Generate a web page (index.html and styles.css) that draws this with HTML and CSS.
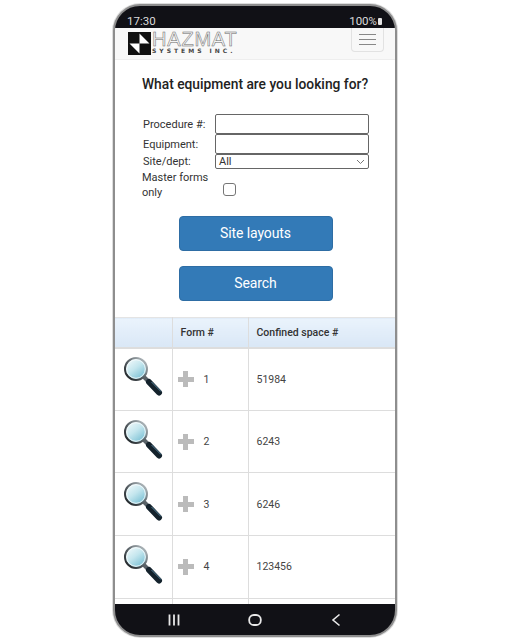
FILE: index.html
```html
<!DOCTYPE html>
<html lang="en">
<head>
  <meta charset="UTF-8">
  <meta name="viewport" content="width=device-width, initial-scale=1">
  <title>Hazmat Systems</title>
  <link rel="stylesheet" href="styles.css">
</head>
<body>
  <svg class="defs" width="0" height="0">
    <defs>
      <linearGradient id="glass" x1="0.15" y1="0.1" x2="0.8" y2="0.95">
        <stop offset="0" stop-color="#eef8fa"/>
        <stop offset="0.45" stop-color="#c4e6ee"/>
        <stop offset="1" stop-color="#74bdd2"/>
      </linearGradient>
      <linearGradient id="rim" x1="1" y1="0" x2="0" y2="1">
        <stop offset="0" stop-color="#c6ced2"/>
        <stop offset="0.5" stop-color="#5a6267"/>
        <stop offset="1" stop-color="#15191c"/>
      </linearGradient>
      <symbol id="lens" viewBox="0 0 40 42">
        <path d="M20 20 L25 25" stroke="#596268" stroke-width="4"/>
        <path d="M25 25 L35 35.5" stroke="#14222c" stroke-width="6" stroke-linecap="round"/>
        <path d="M27.5 25 L37 34.5" stroke="#55829b" stroke-width="1"/>
        <circle cx="12" cy="12" r="11" fill="url(#glass)" stroke="url(#rim)" stroke-width="2"/>
        <circle cx="12" cy="12" r="9.3" fill="none" stroke="#f6fbfc" stroke-width="0.9"/>
      </symbol>
    </defs>
  </svg>

  <div class="phone">
    <div class="status-bar">
      <span>17:30</span>
      <span class="battery-wrap">100%<span class="battery"></span></span>
    </div>

    <div class="screen">
      <div class="navbar">
        <div class="logo">
          <svg class="logo-mark" width="23" height="23" viewBox="0 0 23 23">
            <rect width="23" height="23" fill="#111"/>
            <path d="M11.5 1.5 L21.5 11.5 H11.5 Z M11.5 11.5 V21.5 L1.5 11.5 Z" fill="#fff"/>
          </svg>
          <div class="logo-text">
            <div class="logo-name">HAZMAT</div>
            <div class="logo-sub">SYSTEMS INC.</div>
          </div>
        </div>
        <div class="toggler">
          <span></span><span></span><span></span>
        </div>
      </div>

      <h1>What equipment are you looking for?</h1>

      <div class="form">
        <div class="row row-input">
          <label>Procedure #:</label>
          <div class="fake-input"></div>
        </div>
        <div class="row row-input">
          <label>Equipment:</label>
          <div class="fake-input"></div>
        </div>
        <div class="row row-select">
          <label>Site/dept:</label>
          <div class="fake-select">
            <span>All</span>
            <svg width="9" height="6" viewBox="0 0 9 6"><path d="M1 1 L4.5 4.5 L8 1" fill="none" stroke="#777" stroke-width="1"/></svg>
          </div>
        </div>
        <div class="row-master">
          <label>Master forms only</label>
          <div class="check"></div>
        </div>
      </div>

      <div class="buttons">
        <button>Site layouts</button>
        <button>Search</button>
      </div>

      <table>
        <thead>
          <tr>
            <th class="col-icon"></th>
            <th class="col-form">Form #</th>
            <th>Confined space #</th>
          </tr>
        </thead>
        <tbody>
          <tr>
            <td><svg class="lens" width="40" height="42"><use href="#lens"/></svg></td>
            <td><div class="form-no"><span class="plus"></span>1</div></td>
            <td>51984</td>
          </tr>
          <tr>
            <td><svg class="lens" width="40" height="42"><use href="#lens"/></svg></td>
            <td><div class="form-no"><span class="plus"></span>2</div></td>
            <td>6243</td>
          </tr>
          <tr>
            <td><svg class="lens" width="40" height="42"><use href="#lens"/></svg></td>
            <td><div class="form-no"><span class="plus"></span>3</div></td>
            <td>6246</td>
          </tr>
          <tr>
            <td><svg class="lens" width="40" height="42"><use href="#lens"/></svg></td>
            <td><div class="form-no"><span class="plus"></span>4</div></td>
            <td>123456</td>
          </tr>
          <tr><td></td><td></td><td></td></tr>
        </tbody>
      </table>
    </div>

    <div class="nav-bar">
      <svg width="12" height="12" viewBox="0 0 12 12"><path d="M1.5 0.5 V11.5 M6 0.5 V11.5 M10.5 0.5 V11.5" stroke="#e8e8e8" stroke-width="1.8"/></svg>
      <svg width="14" height="12" viewBox="0 0 14 12"><rect x="1.2" y="1" width="11.6" height="10" rx="4.6" fill="none" stroke="#e8e8e8" stroke-width="1.8"/></svg>
      <svg width="10" height="14" viewBox="0 0 10 14"><path d="M8.5 1.5 L2 7 L8.5 12.5" fill="none" stroke="#e8e8e8" stroke-width="1.6"/></svg>
    </div>
  </div>
</body>
</html>
```

FILE: styles.css
```css
html, body {
  margin: 0;
  height: 640px;
  overflow: hidden;
  background: white;
}

body {
  font-family: Roboto, 'Liberation Sans', sans-serif;
  color: #333;
  padding-top: 4px;
  box-sizing: border-box;
}

.defs {
  display: block;
  height: 0;
}

.phone {
  width: 284px;
  height: 633px;
  margin-left: 113px;
  box-sizing: border-box;
  border: 2px solid #8e8e8e;
  border-radius: 27px;
  box-shadow: 0 0 0 1px #ddd;
  background: #111116;
  overflow: hidden;
  display: flex;
  flex-direction: column;
}

.status-bar {
  height: 22px;
  flex: none;
  box-sizing: border-box;
  padding: 8px 13px 0 12px;
  display: flex;
  justify-content: space-between;
  align-items: center;
  color: #dcdcdc;
  font-size: 11.5px;
}

.battery-wrap {
  display: flex;
  align-items: center;
  gap: 1px;
}

.battery {
  width: 4px;
  height: 7px;
  background: #e4e4e4;
  border-radius: 1px;
}

.screen {
  flex: 1;
  min-height: 0;
  overflow: hidden;
  background: white;
}

.navbar {
  height: 32px;
  box-sizing: border-box;
  background: #f8f8f8;
  border-bottom: 1px solid #eee;
  display: flex;
  justify-content: space-between;
  padding: 0 11px 0 13px;
}

.logo {
  display: flex;
  align-items: center;
  gap: 1px;
  height: 31px;
}

.logo-text {
  width: 86px;
  opacity: 0.99;
}

.logo-name {
  font-family: 'Liberation Sans', sans-serif;
  font-size: 20px;
  line-height: 15px;
  letter-spacing: 0.8px;
  color: #f4f4f4;
  -webkit-text-stroke: 0.5px #666;
}

.logo-sub {
  font-family: 'DejaVu Sans', sans-serif;
  font-size: 6px;
  line-height: 8px;
  font-weight: bold;
  letter-spacing: 3px;
  white-space: nowrap;
  color: #444;
}

.toggler {
  width: 33px;
  height: 24px;
  box-sizing: border-box;
  border: 1px solid #e2e2e2;
  border-top: none;
  border-radius: 0 0 4px 4px;
  display: flex;
  flex-direction: column;
  justify-content: center;
  align-items: center;
  gap: 3.5px;
}

.toggler span {
  width: 17px;
  height: 1.5px;
  background: #888;
}

h1 {
  margin: 0;
  padding-top: 15px;
  text-align: center;
  font-size: 13.8px;
  line-height: 18px;
  font-weight: 500;
  color: #222;
}

.form {
  padding: 21px 26px 0 26px;
  font-size: 11px;
  color: #333;
}

.row {
  display: grid;
  grid-template-columns: 74px 154px;
  align-items: center;
}

.row label {
  padding-left: 2px;
}

.row-input {
  height: 20px;
}

.row-select {
  height: 15px;
}

.fake-input {
  height: 20px;
  box-sizing: border-box;
  border: 1px solid #666;
  border-radius: 2px;
  background: white;
}

.fake-select {
  height: 15px;
  box-sizing: border-box;
  border: 1px solid #666;
  border-radius: 2px;
  padding: 0 3px;
  display: flex;
  justify-content: space-between;
  align-items: center;
}

.row-master {
  display: flex;
  align-items: center;
  height: 30px;
  margin-top: 1px;
  padding-left: 1px;
}

.row-master label {
  width: 81px;
  line-height: 15px;
}

.check {
  width: 13px;
  height: 13px;
  margin-top: 9px;
  box-sizing: border-box;
  border: 1px solid #767676;
  border-radius: 3px;
}

.buttons {
  padding: 16px 0 0 1px;
  display: flex;
  flex-direction: column;
  align-items: center;
  gap: 15px;
}

button {
  width: 154px;
  height: 35px;
  box-sizing: border-box;
  background: #337ab7;
  border: 1px solid #2e6da4;
  border-radius: 4px;
  color: white;
  font-family: inherit;
  font-size: 14px;
  letter-spacing: -0.1px;
  padding: 0 0 2px;
}

table {
  width: 100%;
  margin-top: 16px;
  border-collapse: collapse;
  table-layout: fixed;
  font-size: 10.5px;
}

th, td {
  box-sizing: border-box;
  text-align: left;
  padding: 0 0 0 8px;
  border: 1px solid #ddd;
}

th:first-child, td:first-child {
  border-left: none;
}

th:last-child, td:last-child {
  border-right: none;
}

th {
  height: 30px;
  background: linear-gradient(#eaf3fc, #d9e7f6);
  border-top: 1px solid #e4e4e4;
  border-bottom: 2px solid #ddd;
  font-weight: 500;
  color: #333;
}

.col-icon {
  width: 57px;
  padding: 0;
}

.col-form {
  width: 76px;
}

td {
  height: 62.7px;
  color: #444;
}

td:first-child {
  padding: 0 0 0 9px;
}

.lens {
  display: block;
  margin-top: -2px;
}

.form-no {
  display: flex;
  align-items: center;
}

.plus {
  width: 16px;
  height: 16px;
  margin: 0 10px 0 -3px;
  background:
    linear-gradient(#bbb, #bbb) center / 16px 5px no-repeat,
    linear-gradient(#bbb, #bbb) center / 5px 16px no-repeat;
}

.nav-bar {
  height: 31px;
  flex: none;
  display: grid;
  grid-template-columns: repeat(3, 81px);
  justify-content: center;
  justify-items: center;
  align-items: center;
}
```
